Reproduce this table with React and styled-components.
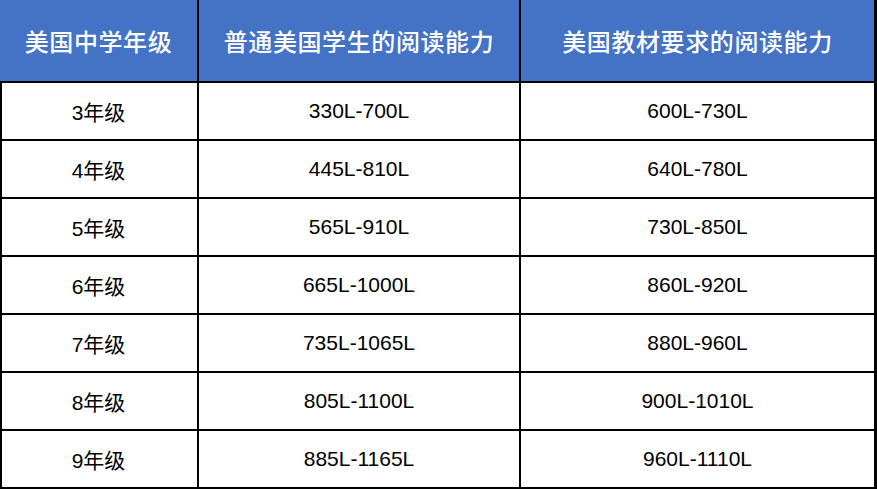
import React from 'react';
import styled, { createGlobalStyle } from 'styled-components';

const GlobalStyle = createGlobalStyle`
  html, body {
    margin: 0;
    padding: 0;
    background: #fff;
  }
`;

// black background shows through the gaps as grid lines
const Table = styled.div`
  width: 877px;
  height: 489px;
  box-sizing: border-box;
  display: grid;
  grid-template-columns: 197px 320px 353px;
  grid-template-rows: 81px repeat(7, 56px);
  gap: 2px;
  padding: 0 3px 2px 0;
  background: #000;
  font-family: "Liberation Sans", "Noto Sans CJK SC", sans-serif;
`;

const HeadCell = styled.div`
  display: flex;
  align-items: center;
  justify-content: center;
  background: #4472c4;
  color: #fff;
  font-family: "Noto Sans CJK SC", sans-serif;
  font-size: 24px;
  font-weight: 500;
  letter-spacing: 0.6px;
`;

const Cell = styled.div`
  display: flex;
  align-items: center;
  justify-content: center;
  background: #fff;
  color: #000;
  font-size: 21px;
  box-shadow: ${(p) => (p.$first ? 'inset 2px 0 0 #000' : 'none')};
`;

const Grade = styled.span`
  font-family: "Liberation Sans", "Noto Sans CJK SC", sans-serif;
`;

const headers = ['美国中学年级', '普通美国学生的阅读能力', '美国教材要求的阅读能力'];

const rows = [
  ['3', '330L-700L', '600L-730L'],
  ['4', '445L-810L', '640L-780L'],
  ['5', '565L-910L', '730L-850L'],
  ['6', '665L-1000L', '860L-920L'],
  ['7', '735L-1065L', '880L-960L'],
  ['8', '805L-1100L', '900L-1010L'],
  ['9', '885L-1165L', '960L-1110L'],
];

export default function App() {
  return (
    <>
      <GlobalStyle />
      <Table>
        {headers.map((h) => (
          <HeadCell key={h}>{h}</HeadCell>
        ))}
        {rows.map(([grade, normal, required]) => (
          <React.Fragment key={grade}>
            <Cell $first>
              <Grade>{grade}年级</Grade>
            </Cell>
            <Cell>{normal}</Cell>
            <Cell>{required}</Cell>
          </React.Fragment>
        ))}
      </Table>
    </>
  );
}
